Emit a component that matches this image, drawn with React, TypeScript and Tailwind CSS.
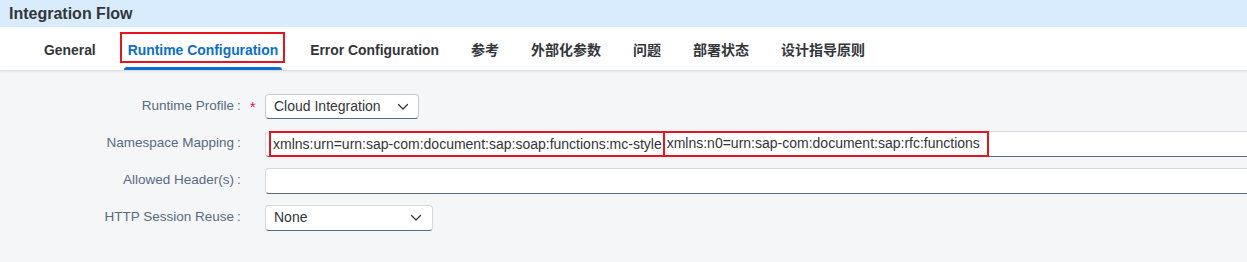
import React from "react";

const font = { fontFamily: '"Liberation Sans", "Noto Sans CJK SC", sans-serif' };

function Chevron() {
  return (
    <svg width="12" height="8" viewBox="0 0 12 8" fill="none">
      <path d="M1.5 1.5 L6 6 L10.5 1.5" stroke="#32363a" strokeWidth="1.3" strokeLinecap="round" strokeLinejoin="round" />
    </svg>
  );
}

const tabs = [
  { t: "General", cjk: false },
  { t: "Runtime Configuration", cjk: false },
  { t: "Error Configuration", cjk: false },
  { t: "参考", cjk: true },
  { t: "外部化参数", cjk: true },
  { t: "问题", cjk: true },
  { t: "部署状态", cjk: true },
  { t: "设计指导原则", cjk: true },
];

function Label({ text }: { text: string }) {
  return (
    <div className="flex justify-end text-[13.5px] text-[#556b82] whitespace-nowrap">
      <span>{text}</span>
      <span className="w-[9px] pl-[3px]">:</span>
    </div>
  );
}

export default function App() {
  return (
    <div className="w-[1247px] h-[262px] overflow-hidden flex flex-col bg-[#f5f6f7]" style={font}>
      <div className="h-[27px] bg-[#d9ecfd] flex items-center pl-[9px]">
        <span className="text-[16px] font-bold text-[#32363a]">Integration Flow</span>
      </div>
      <div className="h-[44px] bg-white border-b border-[#dcdde0] shadow-[0_1px_2px_rgba(0,0,0,0.06)] flex items-stretch pl-[44px] gap-[32px]">
        {tabs.map(({ t, cjk }, i) => (
          <div key={t} className="relative flex items-center pt-[3px]">
            <span className={`${cjk ? "text-[14px]" : "text-[13.9px]"} font-bold ${i === 1 ? "text-[#0a6ed1]" : "text-[#32363a]"}`}>{t}</span>
            {i === 1 && (
              <>
                <div className="absolute left-[-4px] right-[-4px] bottom-0 h-[3px] rounded-t bg-[#0a6ed1]" />
                <div className="absolute left-[-8px] right-[-7px] top-[5px] h-[31px] border-2 border-[#e8131f]" />
              </>
            )}
          </div>
        ))}
      </div>
      <div className="flex-1 pt-[17px]">
        <div className="grid grid-cols-[243px_22px_1fr] auto-rows-[37px] items-center">
          <Label text="Runtime Profile" />
          <div className="text-[#e9006b] text-[14px] pl-[7px] pt-[2px]">*</div>
          <div className="w-[154px] h-[25px] bg-white border border-[#c7cbd0] border-b-[#556b82] rounded-[4px] flex items-center justify-between pl-[8px] pr-[9px] text-[14px] text-[#32363a]">
            <span>Cloud Integration</span>
            <Chevron />
          </div>

          <Label text="Namespace Mapping" />
          <div />
          <div className="w-[1000px] h-[26px] bg-white border border-[#d9d9d9] border-b-[#556b82] rounded-[4px] flex items-center pl-[3px] text-[14px] text-[#32363a] whitespace-nowrap">
            <span className="h-[26px] border-2 border-[#e8131f] flex items-center pl-[2px] pr-[1px] mt-[1px]">xmlns:urn=urn:sap-com:document:sap:soap:functions:mc-style</span>
            <span className="h-[26px] border-2 border-[#e8131f] flex items-center pl-[2px] pr-[7px] ml-[-2px]">xmlns:n0=urn:sap-com:document:sap:rfc:functions</span>
          </div>

          <Label text="Allowed Header(s)" />
          <div />
          <div className="w-[1000px] h-[26px] bg-white border border-[#d9d9d9] border-b-[#556b82] rounded-[4px]" />

          <Label text="HTTP Session Reuse" />
          <div />
          <div className="w-[168px] h-[26px] bg-white border border-[#d9d9d9] border-b-[#556b82] rounded-[4px] flex items-center justify-between pl-[8px] pr-[10px] text-[14px] text-[#32363a]">
            <span>None</span>
            <Chevron />
          </div>
        </div>
      </div>
    </div>
  );
}
